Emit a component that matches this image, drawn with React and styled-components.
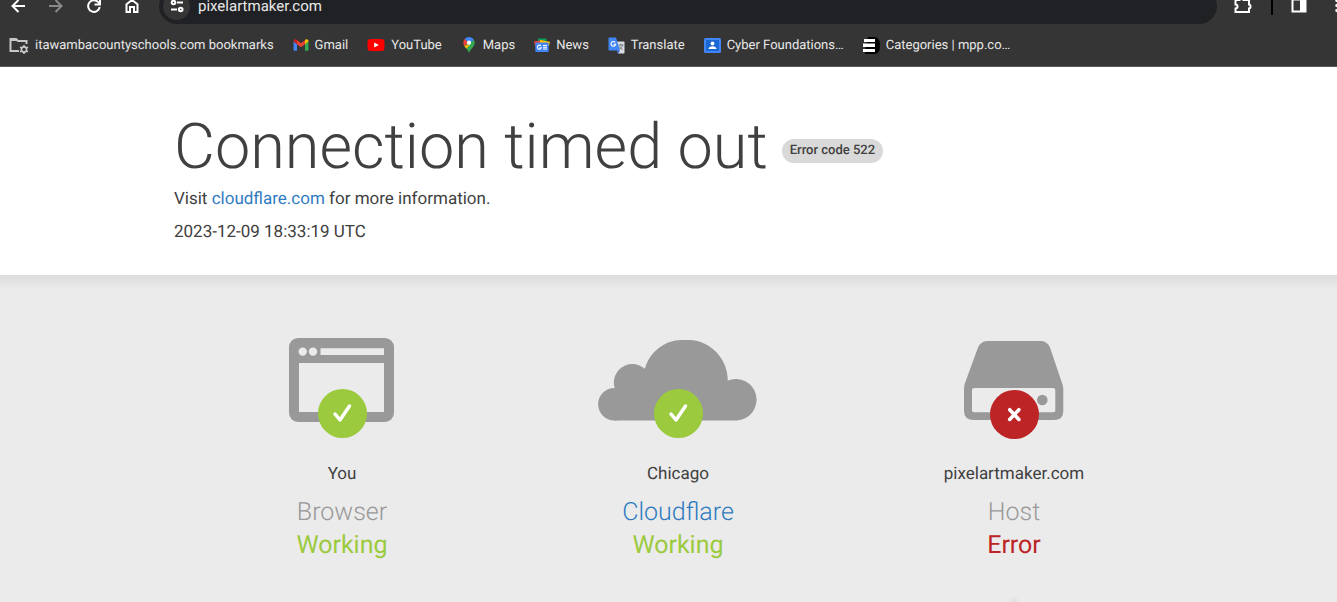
import styled, { createGlobalStyle } from "styled-components"


const bookmarks = [
  { name: "itawambacountyschools.com bookmarks", Icon: FolderIcon, iconSize: 20 },
  { name: "Gmail", Icon: GmailIcon, iconSize: 16 },
  { name: "YouTube", Icon: YoutubeIcon, iconSize: 18 },
  { name: "Maps", Icon: MapsIcon, iconSize: 16 },
  { name: "News", Icon: NewsIcon, iconSize: 16 },
  { name: "Translate", Icon: TranslateIcon, iconSize: 17 },
  { name: "Cyber Foundations…", Icon: ClassroomIcon, iconSize: 17 },
  { name: "Categories | mpp.co…", Icon: CategoriesIcon, iconSize: 17 },
]

const sources = [
  { place: "You", kind: "Browser", status: "Working", Icon: BrowserDrawing },
  { place: "Chicago", kind: "Cloudflare", status: "Working", Icon: CloudDrawing, link: true },
  { place: "pixelartmaker.com", kind: "Host", status: "Error", Icon: HostDrawing },
]

export default function App() {
  return (
    <>
      <GlobalStyle />
      <BrowserBar>
        <Toolbar>
          <ToolbarRow>
            <Buttons>
              <ToolButton aria-label="Back">
                <svg width="16" height="16" viewBox="0 0 16 16" fill="none" stroke="#fff" strokeWidth="2">
                  <path d="M15 8H2.5M8.5 2L2.5 8l6 6" />
                </svg>
              </ToolButton>
              <ToolButton aria-label="Forward">
                <svg width="16" height="16" viewBox="0 0 16 16" fill="none" stroke="#8a8a8a" strokeWidth="2">
                  <path d="M1 8h12.500M7.500 2l6 6-6 6" />
                </svg>
              </ToolButton>
              <ToolButton aria-label="Reload">
                <svg width="16" height="16" viewBox="0 0 16 16" fill="none" stroke="#fff" strokeWidth="2">
                  <path d="M13.700 9A5.800 5.800 0 1 1 12.300 4.200L14 6" />
                  <path d="M14 1v5.500H8.500" />
                </svg>
              </ToolButton>
              <ToolButton aria-label="Home">
                <svg width="16" height="16" viewBox="0 0 16 16" fill="none" stroke="#fff" strokeWidth="2">
                  <path d="M2.500 6.300L8 2l5.500 4.300V14H10V9H6v5H2.500z" />
                </svg>
              </ToolButton>
            </Buttons>
            <AddressBar>
              <SiteButton aria-label="View site information">
                <svg width="16" height="16" viewBox="0 0 16 16" fill="none" stroke="#fff" strokeWidth="2">
                  <path d="M9 4.500h-1M2 11.500h6M8.500 4.500H14" />
                  <circle cx="4.500" cy="4.500" r="1.800" />
                  <circle cx="11.700" cy="11.500" r="1.800" />
                </svg>
              </SiteButton>
              <AddressInput aria-label="Address" defaultValue="pixelartmaker.com" />
            </AddressBar>
            <Extras>
              <ToolButton aria-label="Extensions">
                <svg width="20" height="20" viewBox="0 0 20 20" fill="none" stroke="#fff" strokeWidth="2">
                  <path d="M2.500 4h4a2 2 0 0 1 4 0H16v4.500a1.500 2 0 0 1 0 4V16H2.500v-3.500a2 2 0 0 0 0-4z" />
                </svg>
              </ToolButton>
              <Divider />
              <ToolButton aria-label="Side panel">
                <svg width="16" height="16" viewBox="0 0 16 16">
                  <path d="M1.500 1.500h13v12h-13z" fill="none" stroke="#fff" strokeWidth="2" />
                  <path d="M9 1h6v13H9z" fill="#fff" />
                </svg>
              </ToolButton>
              <ToolButton aria-label="Menu">
                <svg width="4" height="16" viewBox="0 0 4 16" fill="#fff">
                  <circle cx="2" cy="2.500" r="1.700" />
                  <circle cx="2" cy="7.500" r="1.700" />
                  <circle cx="2" cy="12.500" r="1.700" />
                </svg>
              </ToolButton>
            </Extras>
          </ToolbarRow>
        </Toolbar>
        <Bookmarks>
          {bookmarks.map(({ name, Icon, iconSize }) => (
            <Bookmark key={name} href="#">
              <Icon size={iconSize} />
              <span>{name}</span>
            </Bookmark>
          ))}
        </Bookmarks>
      </BrowserBar>

      <Header>
        <Container>
          <TitleRow>
            <Title>Connection timed out</Title>
            <ErrorCode>Error code 522</ErrorCode>
          </TitleRow>
          <Info>
            Visit <Link href="#">cloudflare.com</Link> for more information.
          </Info>
          <Info>2023-12-09 18:33:19 UTC</Info>
        </Container>
      </Header>

      <StatusSection>
        <Sources>
          {sources.map(({ place, kind, status, Icon, link }) => (
            <Source key={place}>
              <Icon />
              <Place>{place}</Place>
              <Kind>{link ? <Link href="#">{kind}</Link> : kind}</Kind>
              <Status $status={status}>{status}</Status>
              {status === "Error" && <Pointer />}
            </Source>
          ))}
        </Sources>
      </StatusSection>
    </>
  )
}

function FolderIcon({ size }) {
  return (
    <svg width={size} height={size} viewBox="0 0 20 20" fill="none" stroke="#c7c7c7" strokeWidth="2">
      <path d="M10 16H1.500V4H7l2 2h8.500v3" />
      <path d="M1.500 5H8" />
      <circle cx="15" cy="14.500" r="2.600" strokeWidth="1.700" />
      <path d="M15 10v2M15 17v2M11 12.200l1.800 1M17.200 15.800l1.800 1M11 16.800l1.800-1M17.200 13.200l1.800-1" strokeWidth="1.500" />
    </svg>
  )
}

function GmailIcon({ size }) {
  return (
    <svg width={size} height={size} viewBox="0 0 16 16">
      <path d="M.500 4.500v8c0 .800.500 1.300 1.200 1.300H4V7z" fill="#4285f4" />
      <path d="M15.500 4.500v8c0 .800-.500 1.300-1.200 1.300H12V7z" fill="#34a853" />
      <path d="M12 3.300V7.200l3.500-2.600V4c0-1.600-1.700-2.400-3-1.400z" fill="#fbbc04" />
      <path d="M.500 4v.600L4 7.200V3.300l-.500-.700C2.200 1.600.500 2.400.500 4z" fill="#c5221f" />
      <path d="M4 3.200l4 3 4-3v4l-4 3-4-3z" fill="#ea4335" />
    </svg>
  )
}

function YoutubeIcon({ size }) {
  return (
    <svg width={size} height={size} viewBox="0 0 18 18">
      <rect x="0.500" y="3" width="17" height="12" rx="3" fill="#f00" />
      <path d="M7.200 6.400v5.200L11.800 9z" fill="#fff" />
    </svg>
  )
}

function MapsIcon({ size }) {
  return (
    <svg width={size} height={size} viewBox="0 0 16 16">
      <path d="M2.700 7.500C3.500 11 7 12 8 16c1-4 5.700-6 5.700-10.300 0-1-.300-2-.700-2.700z" fill="#34a853" />
      <path d="M3.300 8.800L9.500 7.300 5.500 11.600C4.600 10.700 3.800 9.800 3.300 8.800z" fill="#fbbc04" />
      <path d="M2.300 5.700C2.300 4.200 2.800 3 3.700 2l4.300 3.700-4.500 3.500C2.700 8.200 2.300 7 2.300 5.700z" fill="#ea4335" />
      <path d="M3.700 2A5.700 5.700 0 0 1 13 3L8 6z" fill="#4285f4" />
      <circle cx="8" cy="5.700" r="2.100" fill="#fff" />
    </svg>
  )
}

function NewsIcon({ size }) {
  return (
    <svg width={size} height={size} viewBox="0 0 16 16">
      <path d="M4 1.500h8.500V8H4z" fill="#0c9d58" />
      <path d="M0 4.500L9 3l1 5-9 1z" fill="#ea4335" />
      <path d="M6 3l10 1.700L15 9H6z" fill="#ffc107" />
      <rect x="1.300" y="5.500" width="13.400" height="9.500" rx="1" fill="#4285f4" />
      <path d="M7 9a2 2 0 1 0 .300 1.700H5.500" fill="none" stroke="#fff" strokeWidth="1.100" />
      <path d="M9 8.500h4M9 10.300h4M9 12h4" stroke="#fff" />
    </svg>
  )
}

function TranslateIcon({ size }) {
  return (
    <svg width={size} height={size} viewBox="0 0 17 17">
      <path d="M7 4.500h8.500c.600 0 1 .400 1 1v10c0 .600-.400 1-1 1H10z" fill="#dadce0" />
      <path d="M10.500 8h5M13 6.800V8M14.500 8c-.500 2-2 3.500-3.500 4.300M11.500 9.500c.800 1.500 2 2.500 3 3" fill="none" stroke="#6b7480" />
      <path d="M1.500.500H8L12 13.500H1.500c-.600 0-1-.400-1-1v-11c0-.600.400-1 1-1z" fill="#4285f4" />
      <path d="M9 13.500h3l-2 3z" fill="#1a5bd0" />
      <path d="M7.200 5.500a2.300 2.300 0 1 0 .400 1.800H5.500" fill="none" stroke="#fff" strokeWidth="1.100" />
    </svg>
  )
}

function ClassroomIcon({ size }) {
  return (
    <svg width={size} height={size} viewBox="0 0 17 17">
      <rect x="0" y="1" width="17" height="15" rx="1.500" fill="#4285f4" />
      <rect x="2" y="3" width="13" height="11" fill="#1967d2" />
      <circle cx="8.500" cy="6.500" r="1.900" fill="#fff" />
      <path d="M4.500 12c0-2 2-2.800 4-2.800s4 .800 4 2.800z" fill="#fff" />
    </svg>
  )
}

function CategoriesIcon({ size }) {
  return (
    <svg width={size} height={size} viewBox="0 0 17 17">
      <path d="M5 0h6c4 0 6 3 6 8.500S15 17 11 17H2v-3z" fill="#000" />
      <path d="M1 2h11v3H1zM0 6.500h12v3.500H0zM0 12h12v3H0z" fill="#fff" />
    </svg>
  )
}

function Check() {
  return (
    <>
      <circle cx="84.500" cy="78.500" r="24.500" fill="#9bca3e" />
      <path d="M77 79l5 6L91.500 71" fill="none" stroke="#fff" strokeWidth="3.500" strokeLinecap="round" strokeLinejoin="round" />
    </>
  )
}

function BrowserDrawing() {
  return (
    <Drawing viewBox="0 0 168 104" aria-hidden="true">
      <rect x="31" y="3" width="105" height="84" rx="9" fill="#999" />
      <path d="M62.500 13.200H126V20H62.500zM41 28h85v49H41z" fill="#ebebeb" />
      <circle cx="44.700" cy="16.600" r="4.200" fill="#ebebeb" />
      <circle cx="55" cy="16.600" r="4.200" fill="#ebebeb" />
      <Check />
    </Drawing>
  )
}

function CloudDrawing() {
  return (
    <Drawing viewBox="0 0 168 104" aria-hidden="true">
      <circle cx="20.300" cy="69.300" r="16.200" fill="#999" />
      <circle cx="38.300" cy="47.500" r="18.500" fill="#999" />
      <path
        d="M20.300 85.500V58L51 33.200C56 16 72 4.900 87 4.900H97C117 6.500 134 24 133.800 45.500A20.800 20.800 0 1 1 142.500 85.500z"
        fill="#999"
      />
      <Check />
    </Drawing>
  )
}

function HostDrawing() {
  return (
    <Drawing viewBox="0 0 168 104" aria-hidden="true">
      <path
        d="M57 6H111.500Q117.500 6.500 120 12.500L132 48Q133.300 51 133.300 54V76Q133.300 85 124 85H44Q34 85 34 76V54Q34 51 35 48L48 12.500Q50.500 6.500 57 6z"
        fill="#999"
      />
      <rect x="42" y="53" width="83.300" height="24.200" rx="2" fill="#ebebeb" />
      <circle cx="112.300" cy="65" r="5.300" fill="#999" />
      <circle cx="84.500" cy="79.500" r="24.500" fill="#bd2426" />
      <path d="M79.700 74.700l9.200 9.800M88.900 74.700l-9.200 9.800" stroke="#fff" strokeWidth="3.500" strokeLinecap="round" />
    </Drawing>
  )
}

const GlobalStyle = createGlobalStyle`
  * {
    box-sizing: border-box;
  }
  body {
    margin: 0;
    min-height: 100vh;
    background-color: #ebebeb;
    color: #404040;
    font-family: Roboto, "Liberation Sans", sans-serif;
    font-size: 17px;
    text-rendering: geometricPrecision;
  }
`

const BrowserBar = styled.div`
  background-color: #353535;
  color: #e8e8e8;
  border-bottom: 1px solid #5c5858;
`

const Toolbar = styled.div`
  display: flex;
  align-items: flex-end;
  height: 24px;
  overflow: hidden;
`

const ToolbarRow = styled.div`
  flex: 1;
  display: flex;
  align-items: center;
  height: 36px;
`

const Buttons = styled.div`
  display: flex;
  gap: 22px;
  width: 159px;
  padding-left: 10px;
`

const ToolButton = styled.button`
  display: flex;
  flex-shrink: 0;
  padding: 0;
  border: none;
  background: none;
`

const AddressBar = styled.div`
  flex: 1;
  display: flex;
  align-items: center;
  gap: 8px;
  height: 36px;
  padding-left: 4px;
  border-radius: 18px;
  background-color: #202124;
`

const SiteButton = styled.button`
  display: flex;
  align-items: center;
  justify-content: center;
  width: 27px;
  height: 27px;
  padding: 0;
  border: none;
  border-radius: 50%;
  background-color: #353535;
`

const AddressInput = styled.input`
  flex: 1;
  padding: 0;
  border: none;
  outline: none;
  background: none;
  color: #e8e8e8;
  font-family: inherit;
  font-size: 15px;
  text-rendering: inherit;
`

const Extras = styled.div`
  display: flex;
  align-items: center;
  gap: 18px;
  width: 120px;
  padding-left: 16px;
  overflow: hidden;

  button:last-child {
    margin-left: 10px;
  }
`

const Divider = styled.span`
  flex-shrink: 0;
  width: 2px;
  height: 18px;
  background-color: #000;
`

const Bookmarks = styled.nav`
  display: flex;
  align-items: center;
  gap: 19px;
  height: 42px;
  padding-left: 9px;
`

const Bookmark = styled.a`
  display: flex;
  align-items: center;
  gap: 6px;
  color: inherit;
  font-size: 13px;
  line-height: 16px;
  text-decoration: none;
  white-space: nowrap;

  span {
    padding-top: 2px;
  }
`

const Header = styled.header`
  padding: 42px 0 22px 19px;
  background-color: #fff;
`

const Container = styled.div`
  max-width: 1008px;
  margin: 0 auto;
`

const TitleRow = styled.div`
  display: flex;
  align-items: center;
  gap: 14px;
`

const Title = styled.h1`
  margin: 0;
  font-size: 63px;
  font-weight: 300;
  line-height: 78px;
`

const ErrorCode = styled.span`
  margin-top: 6px;
  padding: 4px 8px;
  border-radius: 12px;
  background-color: #d9d9d9;
  font-size: 13px;
  font-weight: 500;
  line-height: 16px;
`

const Info = styled.p`
  margin: 0 0 8px;
  line-height: 25px;
`

const Link = styled.a`
  color: #2f7bbf;
  text-decoration: none;
`

const StatusSection = styled.main`
  padding: 60px 0 0 19px;
  background-image: linear-gradient(#dcdcdc, #ebebeb 14px);
`

const Sources = styled(Container)`
  display: grid;
  grid-template-columns: repeat(3, 1fr);
`

const Source = styled.section`
  display: flex;
  flex-direction: column;
  align-items: center;
`

const Drawing = styled.svg`
  width: 168px;
  height: 104px;
`

const Place = styled.span`
  margin-top: 23px;
  line-height: 25px;
`

const Kind = styled.h2`
  margin: 9px 0 0;
  color: #999;
  font-size: 25px;
  font-weight: 300;
  line-height: 33px;
`

const Status = styled.span`
  color: ${(props) => (props.$status === "Error" ? "#bd2426" : "#9bca3e")};
  font-size: 25px;
  line-height: 33px;
`

// soft tip under the source that failed
const Pointer = styled.span`
  width: 16px;
  height: 5px;
  margin-top: 35px;
  background-image: radial-gradient(circle at bottom, #dfdfdf, #ebebeb 6px);
`
